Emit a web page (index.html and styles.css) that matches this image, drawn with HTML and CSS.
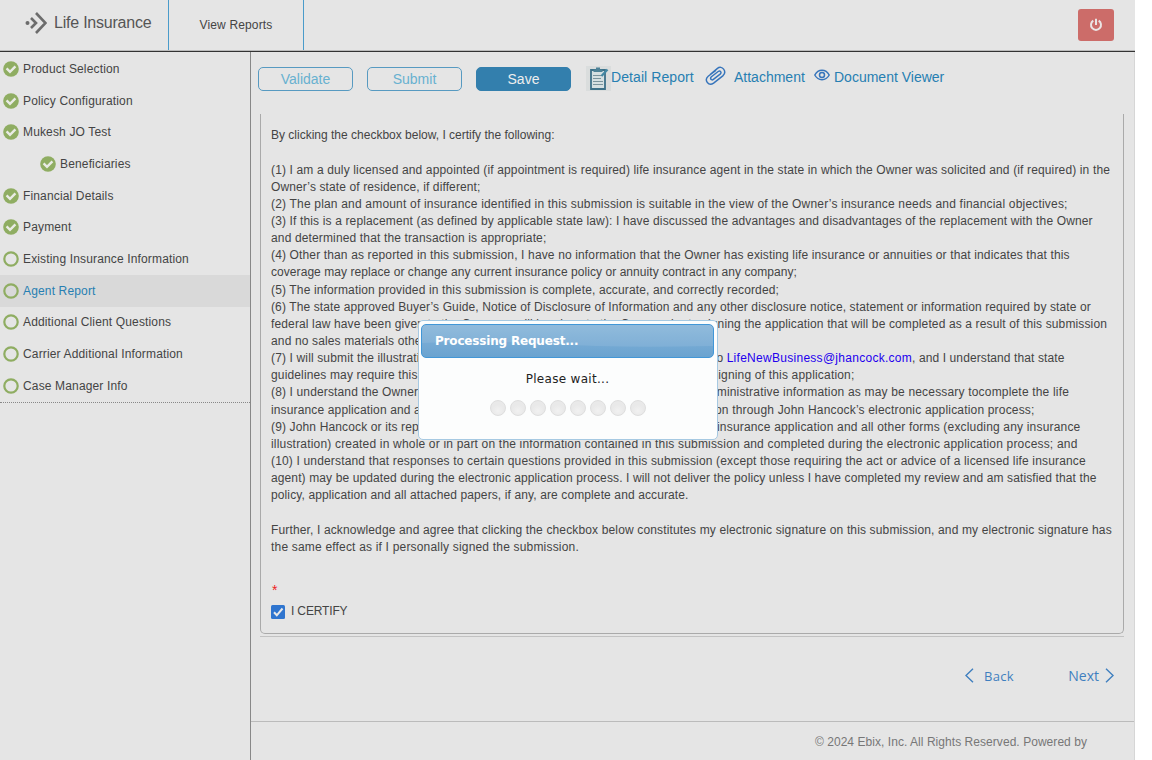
FILE: index.html
```html
<!DOCTYPE html>
<html lang="en">
<head>
<meta charset="utf-8">
<title>Life Insurance</title>
<link rel="stylesheet" href="styles.css">
</head>
<body>
<svg width="0" height="0" class="defs">
  <symbol id="done" viewBox="0 0 16 16"><circle cx="8" cy="8" r="7.8" fill="#8fad62"/><path d="M3.6 7.4 L7 10.8 L12.4 5.3" fill="none" stroke="#e9ebe5" stroke-width="2.4"/></symbol>
  <symbol id="todo" viewBox="0 0 16 16"><circle cx="8" cy="8" r="6.7" fill="none" stroke="#8fad62" stroke-width="2.2"/></symbol>
</svg>
<div class="app">
  <header class="top">
    <div class="brand">
      <svg class="logo" width="22" height="22" viewBox="0 0 22 22"><circle cx="2.5" cy="11" r="2" fill="#6c6c6c"/><path d="M6 6 L11 11 L6 16 M11 1 L20.5 11 L11 21" fill="none" stroke="#6c6c6c" stroke-width="2.6"/></svg>
      <span>Life Insurance</span>
    </div>
    <div class="reports">View Reports</div>
    <div class="power"><svg width="14" height="14" viewBox="0 0 14 14"><path d="M4.3 2.7 A5 5 0 1 0 9.7 2.7 M7 .8 V7" fill="none" stroke="#ebe4e4" stroke-width="2"/></svg></div>
  </header>
  <div class="body">
    <nav class="side">
      <ul>
        <li><svg><use href="#done"/></svg><span>Product Selection</span></li>
        <li><svg><use href="#done"/></svg><span>Policy Configuration</span></li>
        <li><svg><use href="#done"/></svg><span>Mukesh JO Test</span></li>
        <li class="child"><svg><use href="#done"/></svg><span>Beneficiaries</span></li>
        <li><svg><use href="#done"/></svg><span>Financial Details</span></li>
        <li><svg><use href="#done"/></svg><span>Payment</span></li>
        <li><svg><use href="#todo"/></svg><span>Existing Insurance Information</span></li>
        <li class="active"><svg><use href="#todo"/></svg><span>Agent Report</span></li>
        <li><svg><use href="#todo"/></svg><span>Additional Client Questions</span></li>
        <li><svg><use href="#todo"/></svg><span>Carrier Additional Information</span></li>
        <li><svg><use href="#todo"/></svg><span>Case Manager Info</span></li>
      </ul>
    </nav>
    <main class="main">
      <div class="tools">
        <button class="btn">Validate</button>
        <button class="btn">Submit</button>
        <button class="btn save">Save</button>
        <a class="detail"><svg width="25" height="25" viewBox="0 0 25 25"><path fill="#dadddd" d="M0 0H25V25H0z"/><path d="M5 4H19V23H5z" fill="#d5e0e2" stroke="#3d7189" stroke-width="1.8"/><path d="M7.5 6V3.5H10V1.5H14V3.5H16.5V6z" fill="#4d8297"/><path d="M7 9.5H16M7 12.5H15M7 15.5H17M7 18.5H17" stroke="#7a949d"/><path d="M21.5 3.5L15.5 10" stroke="#4388a4" stroke-width="2.2"/></svg><span>Detail Report</span></a>
        <a class="attach"><svg width="21" height="20" viewBox="0 0 21 20"><path d="M10.5 4.6L3.2 10.3C-1.2 14.1 3.6 20.8 8.6 17.1L17.8 9.9C22.4 5.6 17.2-1.6 12.2 2.6L5.4 8.2M14.8 8.4L8.4 13.4C6.4 15 4.6 12.4 6.4 10.8L13.2 5.5C15.2 4 17 6.4 15.2 8.1" fill="none" stroke="#3674bb" stroke-width="1.45" stroke-linecap="round"/></svg><span>Attachment</span></a>
        <a class="viewer"><svg width="16" height="12" viewBox="0 0 16 12"><path d="M.8 6C4.2-.3 11.8-.3 15.2 6C11.8 12.3 4.2 12.3 .8 6z" fill="none" stroke="#3674bb" stroke-width="1.5"/><circle cx="8" cy="6" r="2.5" fill="none" stroke="#3674bb" stroke-width="1.5"/></svg><span>Document Viewer</span></a>
      </div>
      <section class="panel">
        <p class="flat">By clicking the checkbox below, I certify the following:</p>
        <p>(1) I am a duly licensed and appointed (if appointment is required) life insurance agent in the state in which the Owner was solicited and (if required) in the<br>
        <span class="tight">Owner’s state of residence, if different;</span><br>
        <span class="loose">(2) The plan and amount of insurance identified in this submission is suitable in the view of the Owner’s insurance needs and financial objectives;</span><br>
        (3) If this is a replacement (as defined by applicable state law): I have discussed the advantages and disadvantages of the replacement with the Owner<br>
        and determined that the transaction is appropriate;<br>
        (4) Other than as reported in this submission, I have no information that the Owner has existing life insurance or annuities or that indicates that this<br>
        <span class="tighter">coverage may replace or change any current insurance policy or annuity contract in any company;</span><br>
        (5) The information provided in this submission is complete, accurate, and correctly recorded;<br>
        <span class="tight">(6) The state approved Buyer’s Guide, Notice of Disclosure of Information and any other disclosure notice, statement or information required by state or</span><br>
        <span class="mid">federal law have been given to the Owner or will be given to the Owner prior to signing the application that will be completed as a result of this submission</span><br>
        and no sales materials other<br>
        (7) I will submit the illustration <span class="rest r1">to <a>LifeNewBusiness@jhancock.com</a>, and I understand that state</span><br>
        guidelines may require this <span class="rest r2">signing of this application;</span><br>
        (8) I understand the Owner <span class="rest r3">administrative information as may be necessary tocomplete the life</span><br>
        insurance application and all <span class="rest r4">on through John Hancock’s electronic application process;</span><br>
        (9) John Hancock or its repre <span class="rest r5">insurance application and all other forms (excluding any insurance</span><br>
        <span class="loose">illustration) created in whole or in part on the information contained in this submission and completed during the electronic application process; and</span><br>
        <span class="wide">(10) I understand that responses to certain questions provided in this submission (except those requiring the act or advice of a licensed life insurance</span><br>
        <span class="tight">agent) may be updated during the electronic application process. I will not deliver the policy unless I have completed my review and am satisfied that the</span><br>
        <span class="tight">policy, application and all attached papers, if any, are complete and accurate.</span></p>
        <p>Further, I acknowledge and agree that clicking the checkbox below constitutes my electronic signature on this submission, and my electronic signature has<br>
        <span class="loose">the same effect as if I personally signed the submission.</span></p>
        <div class="req">*</div>
        <div class="certify"><svg width="14" height="14" viewBox="0 0 14 14"><rect width="14" height="14" rx="1.5" fill="#2f75cf"/><path d="M3 7.3L5.8 10.3L11.5 3.5" fill="none" stroke="#e9e9e9" stroke-width="2"/></svg><span>I CERTIFY</span></div>
      </section>
      <div class="rule"></div>
      <div class="pager">
        <a class="back"><svg width="9" height="15" viewBox="0 0 9 15"><path d="M8 .8L1 7.5L8 14.2" fill="none" stroke="#3f7fbf" stroke-width="1.4"/></svg><span>Back</span></a>
        <a class="next"><span>Next</span><svg width="9" height="15" viewBox="0 0 9 15"><path d="M1 .8L8 7.5L1 14.2" fill="none" stroke="#3f7fbf" stroke-width="1.4"/></svg></a>
      </div>
      <footer>© 2024 Ebix, Inc. All Rights Reserved. Powered by</footer>
    </main>
  </div>
  <div class="dialog">
    <div class="title"><svg width="291" height="32" viewBox="0 0 291 32" preserveAspectRatio="none"><path d="M0 0H291V21Q190 23 130 19Q70 15 0 18z" fill="#fff" opacity=".09"/></svg><span>Processing Request...</span></div>
    <div class="wait">Please wait...</div>
    <div class="dots"><i></i><i></i><i></i><i></i><i></i><i></i><i></i><i></i></div>
  </div>
</div>
</body>
</html>
```
FILE: styles.css
```css
* { box-sizing: border-box; }
body { margin: 0; background: #fff; font-family: "Liberation Sans", Arial, sans-serif; font-size: 12px; color: #444; }
.defs { display: block; }
.app { position: relative; width: 1135px; height: 760px; background: #e5e5e5; overflow: hidden; }
.top { height: 52px; display: flex; border-bottom: 1px solid #333; box-shadow: inset 0 -1px #bbb; }
.brand { width: 169px; height: 50px; border-right: 1px solid #4a9bca; padding: 0 0 4px 25px; display: flex; align-items: center; gap: 7px; font-size: 16px; letter-spacing: -.22px; color: #555; }
.reports { width: 135px; height: 50px; border-right: 1px solid #4a9bca; display: flex; align-items: center; justify-content: center; letter-spacing: .15px; }
.power { margin: 9px 21px 0 auto; width: 36px; height: 32px; border-radius: 3px; background: #cc6c69; display: flex; align-items: center; justify-content: center; }
.body { display: flex; height: 708px; }
.side { width: 251px; border-right: 1px solid #888; }
.side ul { list-style: none; margin: 0; padding: 1px 0 0; border-bottom: 1px dotted #888; height: 351px; }
.side li { height: 31.7px; display: flex; align-items: center; gap: 4px; padding-left: 3px; letter-spacing: .15px; }
.side svg { width: 16px; height: 16px; }
.side .child { padding-left: 40px; }
.side .active { background: #d9d9d9; color: #277fb2; }
.main { width: 884px; border-right: 1px solid #d6d6d6; display: flex; flex-direction: column; }
.tools { height: 62px; padding: 15px 0 0 7px; display: flex; align-items: flex-start; color: #277fb2; font-size: 14px; }
.btn { width: 95px; height: 24px; margin-right: 14px; padding: 0; border: 1px solid #579ac1; border-radius: 5px; background: transparent; font: 14px "Liberation Sans", Arial, sans-serif; color: #68b1d0; }
.btn.save { background: #337fad; border-color: #337fad; color: #eee; margin-right: 15px; }
.tools a { display: flex; }
.tools a span { line-height: 20px; }
.detail { width: 119px; letter-spacing: .08px; }
.detail svg { margin-top: -1px; }
.attach { gap: 8px; width: 109px; }
.attach svg { margin-top: -1px; }
.viewer { gap: 4px; }
.viewer svg { margin-top: 2px; }
.panel { margin: 0 10px 0 9px; height: 520px; padding: 13px 0 0 10px; border: 1px solid #aaa; border-top: 0; border-radius: 0 0 5px 5px; line-height: 17.143px; white-space: nowrap; letter-spacing: .142px; }
.panel p { margin: 0 0 17.4px; }
.panel a { color: #20e; letter-spacing: .28px; }
.flat { letter-spacing: 0; }
.tighter { letter-spacing: .06px; }
.tight { letter-spacing: .115px; }
.mid { letter-spacing: .133px; }
.wide { letter-spacing: .165px; }
.loose { letter-spacing: .187px; }
.rest { position: absolute; letter-spacing: .18px; }
.r1 { left: 713px; letter-spacing: .1px; }
.r2 { left: 712px; }
.r3 { left: 703px; }
.r4 { left: 715px; }
.r5 { left: 717px; }
.req { color: #e22; margin-top: 26px; height: 21px; font-size: 14px; padding-left: 1px; }
.certify { display: flex; gap: 6px; align-items: center; letter-spacing: -.15px; }
.rule { margin: 2px 10px 0 9px; height: 1px; background: #c2c2c2; }
.pager { height: 85px; border-bottom: 1px solid #bbb; padding: 31px 20px 0 714px; display: flex; align-items: flex-start; justify-content: space-between; font: 13px/16px "Open Sans", sans-serif; letter-spacing: .3px; color: #3f7fbf; }
.pager a { display: flex; gap: 10px; }
.next { font-size: 14px; letter-spacing: 0; }
.pager .next { gap: 6px; }
footer { padding: 13px 47px 0 0; text-align: right; line-height: 14px; letter-spacing: .05px; color: #777; }
.dialog { position: absolute; left: 418px; top: 320px; width: 300px; height: 120px; background: #fcfdfd; border: 1px solid #a6c9e2; border-radius: 5px; padding: 3px 3px 3px 2px; font: 12px "DejaVu Sans", sans-serif; color: #222; }
.title { position: relative; height: 34px; border: 1px solid #4297d7; border-radius: 5px; background: linear-gradient(#86b4d9, #6aa3d0); color: #fff; font-weight: bold; line-height: 32px; padding-left: 13px; letter-spacing: -.18px; overflow: hidden; }
.title svg { position: absolute; left: 0; top: 0; }
.title span { position: relative; }
.wait { text-align: center; margin-top: 13px; line-height: 16px; letter-spacing: .3px; }
.dots { display: flex; justify-content: center; gap: 4px; margin-top: 13px; }
.dots i { width: 16px; height: 16px; border-radius: 50%; background: radial-gradient(circle at 50% 70%, #f1f1f1, #e9e9e9 50%); border: 1px solid #dedede; }
```
